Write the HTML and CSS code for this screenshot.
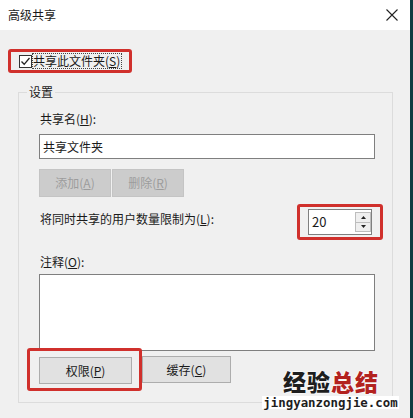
FILE: index.html
```html
<!DOCTYPE html>
<html lang="zh">
<head>
<meta charset="utf-8">
<link rel="stylesheet" href="styles.css">
</head>
<body>
<div class="window">
  <div class="titlebar">
    <span class="title">高级共享</span>
    <svg class="close" width="12" height="12" viewBox="0 0 12 12"><path d="M0.5 0.5 L11.5 11.5 M11.5 0.5 L0.5 11.5" stroke="#222" stroke-width="1.1" fill="none"/></svg>
  </div>
  <div class="content">
    <div class="mark mark-check">
      <span class="checkbox"><svg width="11" height="11" viewBox="0 0 11 11"><path d="M1.5 5.5 L4.2 8.3 L9.5 2" stroke="#222" stroke-width="1.3" fill="none"/></svg></span>
      <span class="focus">共享此文件夹(<u>S</u>)</span>
    </div>
    <div class="group">
      <div class="legend">设置</div>
      <div class="label l-name">共享名(<u>H</u>):</div>
      <div class="textbox">共享文件夹</div>
      <div class="btnrow">
        <span class="btn disabled">添加(<u>A</u>)</span>
        <span class="btn disabled">删除(<u>R</u>)</span>
      </div>
      <div class="limitrow">
        <div class="label l-limit">将同时共享的用户数量限制为(<u>L</u>):</div>
        <div class="mark mark-spin">
          <div class="spin">
            <span class="spinval">20</span>
            <span class="arrows">
              <span class="arr"><svg width="5" height="3" viewBox="0 0 5 3"><path d="M0 3 L2.5 0 L5 3Z" fill="#222"/></svg></span>
              <span class="arr"><svg width="5" height="3" viewBox="0 0 5 3"><path d="M0 0 L2.5 3 L5 0Z" fill="#222"/></svg></span>
            </span>
          </div>
        </div>
      </div>
      <div class="label l-note">注释(<u>O</u>):</div>
      <div class="textarea"></div>
      <div class="bottomrow">
        <div class="mark mark-perm"><span class="btn wide">权限(<u>P</u>)</span></div>
        <span class="btn wide2">缓存(<u>C</u>)</span>
      </div>
    </div>
  </div>
  <div class="watermark">
    <div class="wm-cn"><span class="wm-dark">经验</span><span class="wm-red">总结</span></div>
    <div class="wm-en">jingyanzongjie.com</div>
  </div>
</div>
</body>
</html>
```
FILE: styles.css
```css
* { box-sizing: border-box; }
html, body { margin: 0; padding: 0; }
body {
  width: 413px;
  height: 418px;
  background: #123c42;
  font-family: "Noto Sans CJK SC", "Microsoft YaHei", sans-serif;
  font-size: 12px;
  color: #1a1a1a;
  overflow: hidden;
}
u { text-decoration: underline; text-underline-offset: 1px; }
.window {
  position: relative;
  width: 410px;
  height: 418px;
  background: #f0f0f0;
  display: flex;
  flex-direction: column;
}
.titlebar {
  height: 30px;
  background: #ffffff;
  display: flex;
  align-items: center;
  justify-content: space-between;
  padding: 0 12px 1px 8px;
}
.title { font-size: 12px; line-height: 16px; }
.content {
  padding: 19px 0 0 8px;
  display: flex;
  flex-direction: column;
}
.mark {
  border: 3px solid #d0302c;
  border-radius: 3px;
}
.mark-check {
  width: 124px;
  height: 24px;
  display: flex;
  align-items: center;
  padding-left: 8px;
}
.checkbox {
  width: 13px;
  height: 13px;
  border: 1px solid #333;
  background: #fff;
  display: flex;
  align-items: center;
  justify-content: center;
  margin-right: 1px;
}
.focus {
  line-height: 14px;
  outline: 1px dotted #444;
  outline-offset: 0;
  padding-right: 1px;
}
.group {
  margin: 19px 0 0 10px;
  width: 375px;
  height: 311px;
  border: 1px solid #dcdcdc;
  padding: 0 17px 0 20px;
  display: flex;
  flex-direction: column;
}
.legend {
  margin: -9px 0 0 -12px;
  line-height: 16px;
  background: #f0f0f0;
  padding: 0 2px;
  align-self: flex-start;
}
.label { line-height: 16px; padding-left: 1px; }
.l-name { margin-top: 11px; }
.textbox {
  margin-top: 7px;
  height: 25px;
  border: 1px solid #7f7f7f;
  background: #fff;
  line-height: 23px;
  padding-left: 3px;
}
.btnrow {
  margin-top: 10px;
  display: flex;
  gap: 1px;
}
.btn {
  display: flex;
  align-items: center;
  justify-content: center;
  height: 28px;
  border: 1px solid #adadad;
  background: #e1e1e1;
  line-height: 16px;
}
.btn.disabled {
  width: 72px;
  background: #cccccc;
  border-color: #c4c4c4;
  color: #9c9c9c;
}
.limitrow {
  margin-top: 7px;
  height: 36px;
  display: flex;
  justify-content: space-between;
  align-items: flex-start;
}
.l-limit { margin-top: 7px; }
.mark-spin {
  margin-right: -8px;
  width: 86px;
  height: 36px;
  padding: 2px 8px;
}
.spin {
  height: 26px;
  border: 1px solid #7f7f7f;
  background: #fff;
  display: flex;
  align-items: center;
  justify-content: space-between;
  padding: 0 0 0 3px;
}
.spinval { font-size: 13px; line-height: 16px; }
.arrows {
  display: flex;
  flex-direction: column;
  align-self: stretch;
  padding: 2px 0 2px;
  width: 16px;
}
.arr {
  flex: 1;
  display: flex;
  align-items: center;
  justify-content: center;
  background: #efefef;
  border: 1px solid #bdbdbd;
}
.arr + .arr { border-top: none; }
.l-note { margin-top: 14px; }
.textarea {
  margin-top: 4px;
  height: 77px;
  border: 1px solid #7f7f7f;
  background: #fff;
}
.bottomrow {
  margin-top: -3px;
  display: flex;
  align-items: center;
}
.mark-perm {
  margin-left: -12px;
  width: 115px;
  height: 43px;
  padding: 2px 7px 0 9px;
  display: flex;
  align-items: center;
}
.btn.wide { width: 93px; height: 27px; }
.btn.wide2 { width: 89px; height: 27px; }
.watermark {
  position: absolute;
  left: 262px;
  top: 369px;
  width: 137px;
  display: flex;
  flex-direction: column;
  align-items: center;
}
.wm-cn {
  font-weight: 900;
  font-size: 23px;
  line-height: 25px;
  letter-spacing: 1px;
  margin-left: 1px;
  text-shadow: 0 0 2px #fff, 0 0 2px #fff;
}
.wm-dark { color: #1e1e1e; }
.wm-red { color: #b3221f; }
.wm-en {
  margin-top: 2px;
  font-family: "DejaVu Sans Mono", monospace;
  font-weight: bold;
  font-size: 12.4px;
  line-height: 13px;
  color: #1e1e1e;
  background: #ffffff;
  padding: 0 1px;
}
```
